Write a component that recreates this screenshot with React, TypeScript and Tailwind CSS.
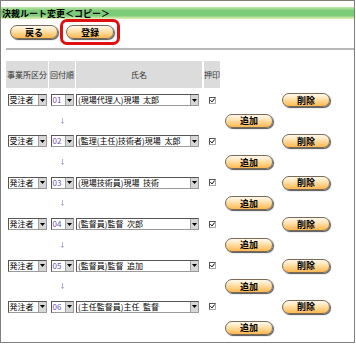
import React from "react";

const FONT = { fontFamily: '"Noto Sans CJK JP", "Noto Sans", sans-serif' };

function Pill({ label }: { label: string }) {
  return (
    <div className="w-[48px] h-[14px] rounded-full border border-[#7a6a55] bg-[linear-gradient(to_bottom,#fffaf0_0%,#ffe3b0_40%,#ffb850_100%)] shadow-[1px_1px_1px_#555] flex items-center justify-center text-[9px] font-bold text-black leading-none">
      {label}
    </div>
  );
}

function Sel({ wClass, text, color }: { wClass: string; text: string; color?: string }) {
  return (
    <div className={`${wClass} h-[12px] border border-t-[#555] border-l-[#555] border-r-[#9a9a9a] border-b-[#9a9a9a] bg-white flex items-stretch overflow-hidden`}>
      <div
        className={`flex-1 overflow-hidden whitespace-pre text-[8px] leading-[10px] pl-[1px] ${color ?? "text-black"}`}
      >
        {text}
      </div>
      <div className="w-[8px] shrink-0 bg-[#d6d6d6] border-l border-[#a0a0a0] flex items-center justify-center">
        <svg width="5" height="3" viewBox="0 0 5 3">
          <path d="M0 0H5L2.5 3Z" fill="#000" />
        </svg>
      </div>
    </div>
  );
}

function Check() {
  return (
    <div className="w-[7px] h-[7px] border border-t-[#555] border-l-[#555] border-r-[#aaa] border-b-[#aaa] bg-white flex items-center justify-center">
      <svg width="5" height="5" viewBox="0 0 5 5">
        <path d="M0.4 2.2 L2 3.9 L4.7 0.5" stroke="#000" strokeWidth="1" fill="none" />
      </svg>
    </div>
  );
}

function Arrow() {
  return (
    <svg width="5" height="6" viewBox="0 0 5 6">
      <path d="M2.5 0 V5.5 M1.2 4 L2.5 5.5 L3.8 4" stroke="#9aa4c8" strokeWidth="0.8" fill="none" />
    </svg>
  );
}

const rows = [
  { kubun: "受注者", no: "01", name: "(現場代理人)現場  太郎" },
  { kubun: "受注者", no: "02", name: "(監理(主任)技術者)現場  太郎" },
  { kubun: "発注者", no: "03", name: "(現場技術員)現場  技術" },
  { kubun: "発注者", no: "04", name: "(監督員)監督  次郎" },
  { kubun: "発注者", no: "05", name: "(監督員)監督  追加" },
  { kubun: "発注者", no: "06", name: "(主任監督員)主任  監督" },
];

export default function App() {
  return (
    <div className="w-[356px] h-[344px] bg-white" style={FONT}>
      <div className="w-[355px] h-[343px] border border-[#808080] bg-white overflow-hidden pt-[6px]">
        <div className="h-[12px] bg-[linear-gradient(to_bottom,#c4e8ac_0%,#7ccb78_30%,#7ccb78_70%,#e2f5b8_100%)] flex items-center pl-[1px] text-[9px] font-bold text-black leading-none">
          決裁ルート変更＜コピー＞
        </div>
        <div className="flex items-center h-[26px]">
          <div className="ml-[9px]">
            <Pill label="戻る" />
          </div>
          <div className="ml-[2px] w-[60px] h-[26px] border-[3px] border-[#e01010] rounded-[7px] flex items-center justify-center">
            <Pill label="登録" />
          </div>
        </div>
        <div className="mt-[3px] ml-[5px] h-[2px] bg-[#b8b8b8]" />
        <div className="mt-[11px] ml-[5px] flex h-[27px] text-[8px] text-[#333] leading-none">
          <div className="w-[42px] bg-[#dcdcdc] flex items-center justify-center">事業所区分</div>
          <div className="w-[26px] ml-[1px] bg-[#dcdcdc] flex items-center justify-center">回付順</div>
          <div className="w-[126px] ml-[1px] bg-[#dcdcdc] flex items-center justify-center">氏名</div>
          <div className="w-[16px] ml-[2px] bg-[#dcdcdc] flex items-center justify-center">押印</div>
        </div>
        <div className="mt-[4px]">
          {rows.map((r, i) => (
            <div key={r.no}>
              <div className="ml-[5px] flex items-center h-[16px]">
                <div className="w-[42px] flex justify-center">
                  <Sel wClass="w-[39px]" text={r.kubun} />
                </div>
                <div className="w-[26px] ml-[1px] flex justify-center">
                  <Sel wClass="w-[23px]" text={r.no} color="text-[#6a4fb0]" />
                </div>
                <div className="w-[126px] ml-[1px] flex">
                  <Sel wClass="w-[123px]" text={r.name} />
                </div>
                <div className="w-[16px] ml-[2px] flex justify-center">
                  <Check />
                </div>
                <div className="ml-[62px]">
                  <Pill label="削除" />
                </div>
              </div>
              <div className="ml-[5px] flex items-center h-[25.4px]">
                <div className="w-[42px]" />
                <div className="w-[26px] ml-[1px] flex justify-center">
                  {i < rows.length - 1 ? <Arrow /> : null}
                </div>
                <div className="w-[126px] ml-[1px]" />
                <div className="w-[16px] ml-[2px]" />
                <div className="ml-[5px]">
                  <Pill label="追加" />
                </div>
              </div>
            </div>
          ))}
        </div>
      </div>
    </div>
  );
}
